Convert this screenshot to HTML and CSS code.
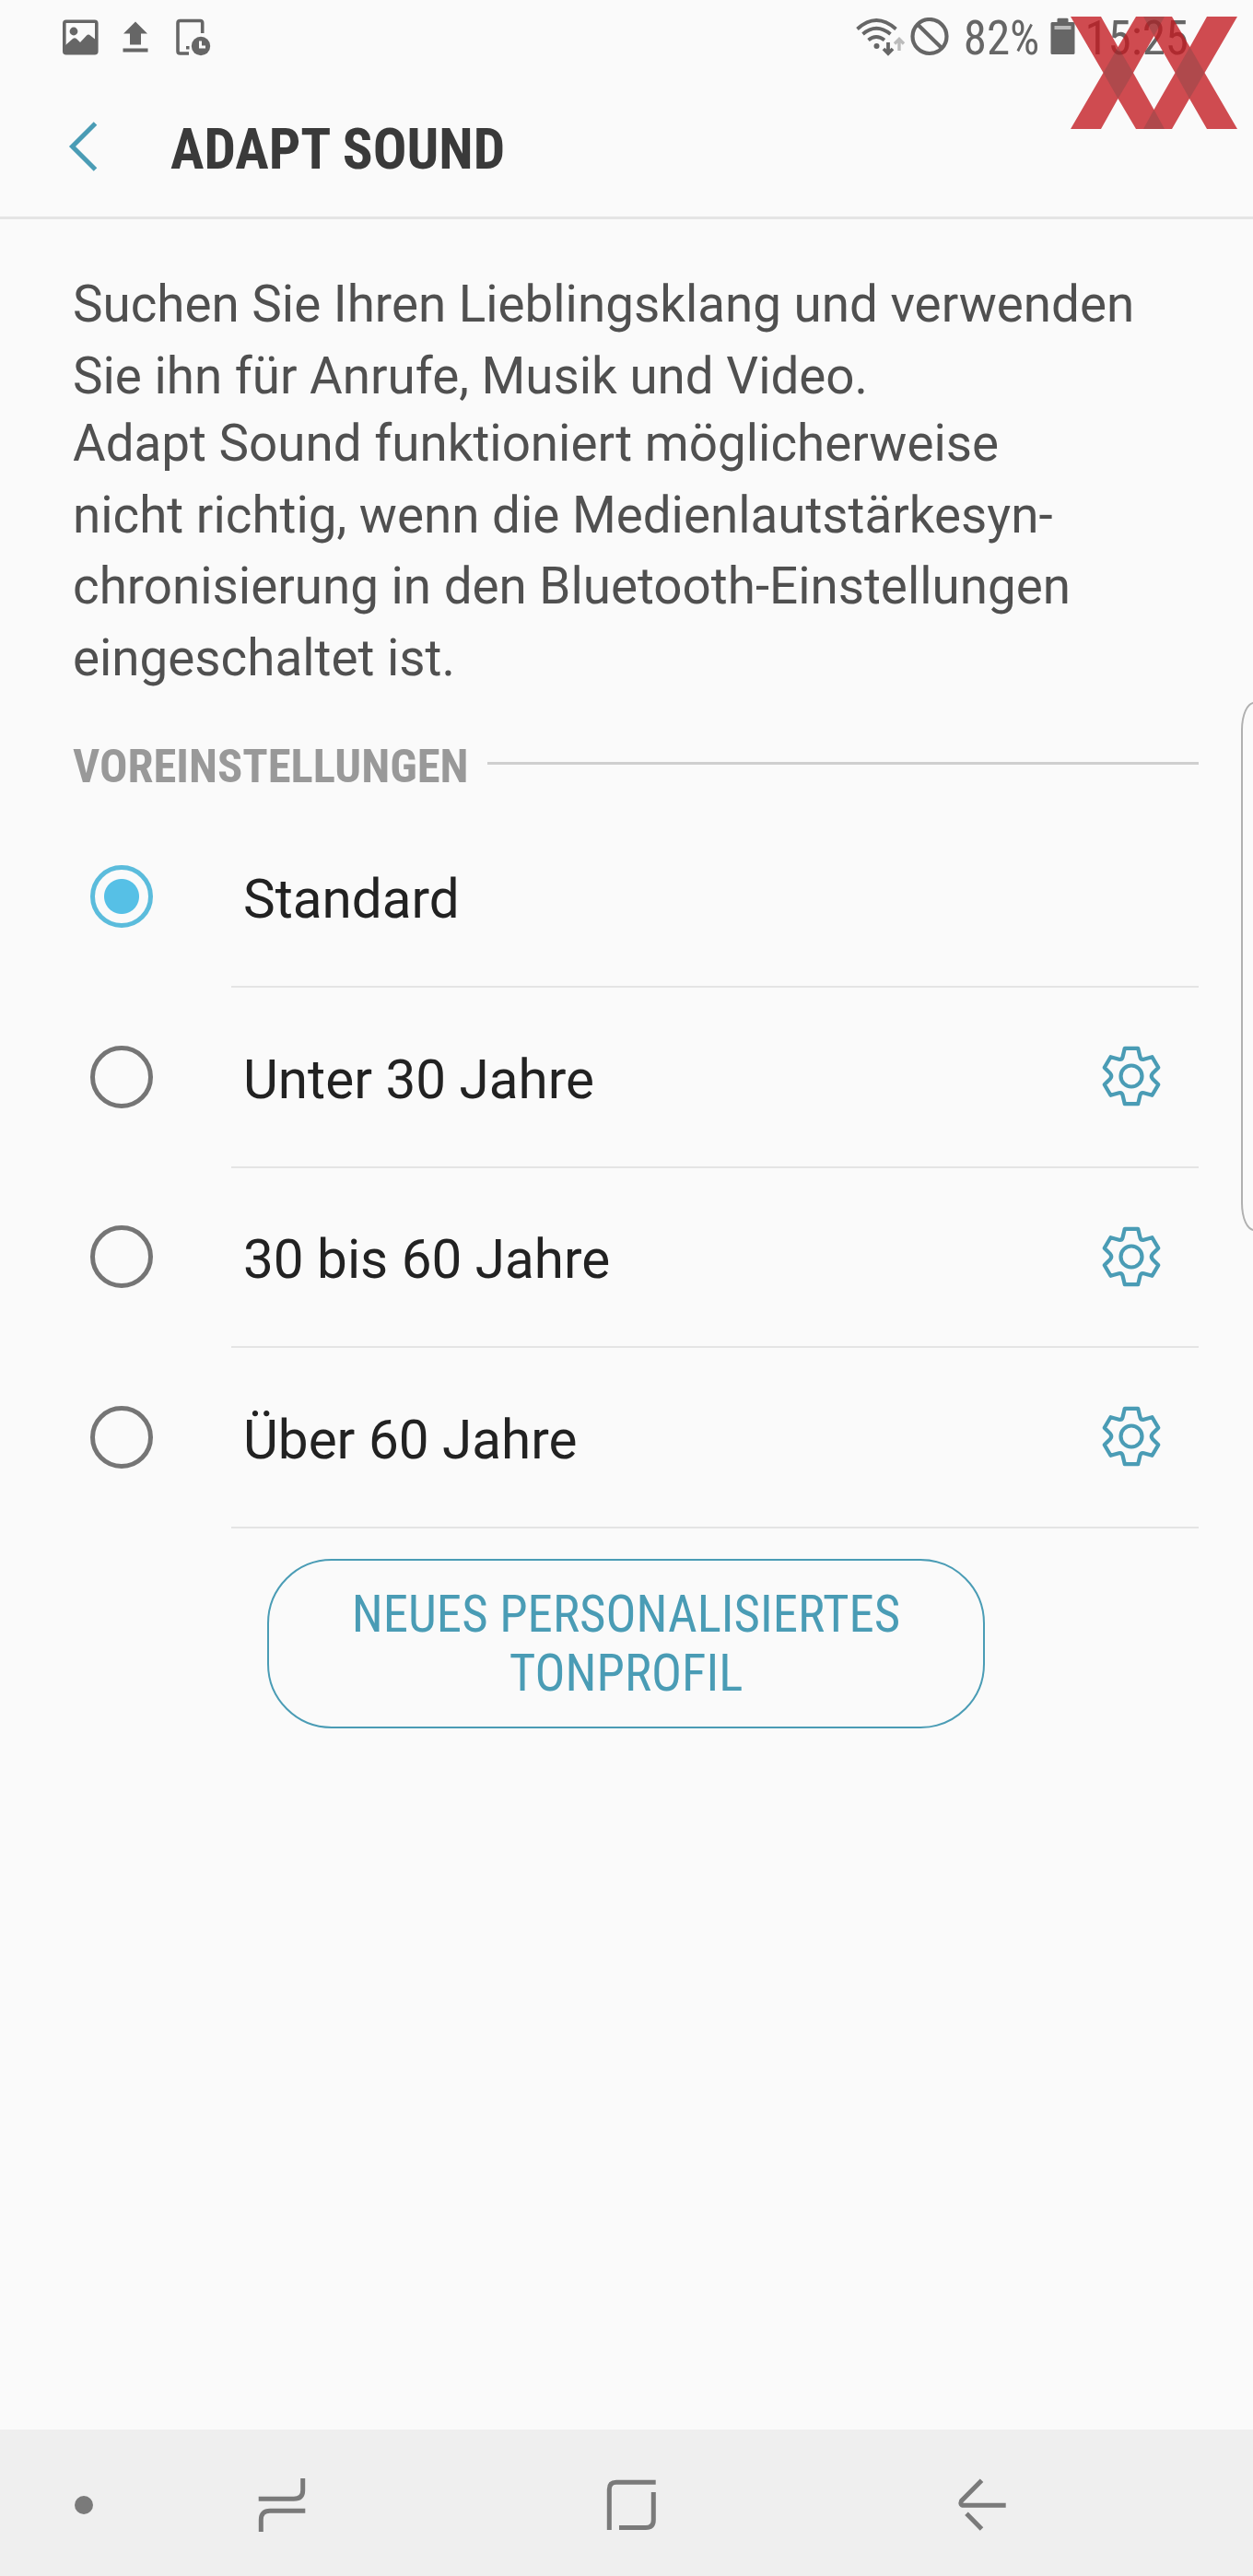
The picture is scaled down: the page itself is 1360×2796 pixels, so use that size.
FILE: index.html
```html
<!DOCTYPE html>
<html lang="de">
<head>
  <meta charset="UTF-8" />
  <meta name="viewport" content="width=device-width, initial-scale=1.0"/>
  <title>Adapt Sound</title>
  <link rel="stylesheet" href="styles.css">
</head>
<body>
  <div class="screen">
    <div class="status-bar">
      <div class="notifications">
        <svg class="icon-picture" width="39" height="39" viewBox="0 0 39 39">
          <rect x="1.8" y="2.3" width="35" height="34.4" rx="2" fill="none" stroke="#666" stroke-width="3.6"/>
          <circle cx="12" cy="13" r="4.4"/>
          <path d="M2 29 L11 21 Q13 19.5 15 21 L19 25 L26 17.5 Q28 15.5 30 17.5 L37 23 V37 H2 Z"/>
        </svg>
        <svg class="icon-upload" width="28" height="39" viewBox="0 0 28 39">
          <path d="M14 2.5 L27 15.5 H20 V27.5 H8 V15.5 H1 Z M0.5 31.5 H27.5 V35.5 H0.5 Z"/>
        </svg>
        <svg class="icon-tablet" width="38" height="41" viewBox="0 0 38 41">
          <path d="M28.7 16 V5 Q28.7 2.5 26.5 2.5 H4.5 Q2 2.5 2 5 V35.5 Q2 38 4.5 38 H14" fill="none" stroke="#666" stroke-width="3.6"/>
          <rect x="11" y="30" width="3.5" height="3.5"/>
          <circle cx="27" cy="30" r="10.2"/>
          <path d="M26.5 24.5 V31 H32" fill="none" stroke="#fafafa" stroke-width="3"/>
        </svg>
      </div>
      <div class="status-info">
        <svg class="icon-wifi" width="54" height="42" viewBox="0 0 54 42">
          <g fill="none" stroke="#666" stroke-width="3.8">
            <path d="M1.5 12.5 Q22 -6.5 43.5 12.5"/>
            <path d="M7.5 18 Q22 5.5 37.5 18"/>
            <path d="M13.5 24.5 Q22 17.5 31 24.5"/>
            <path d="M35 27 V39 M30 34 L35 39 L40 34"/>
          </g>
          <circle cx="22.5" cy="31" r="3"/>
          <path d="M47 36 V24 M42 28.5 L47 23.5 L52 28.5" fill="none" stroke="#bbb" stroke-width="3.4"/>
        </svg>
        <svg class="icon-blocked" width="42" height="42" viewBox="0 0 42 42">
          <g fill="none" stroke="#666" stroke-width="4.2">
            <circle cx="21" cy="20.5" r="18.5"/>
            <path d="M8 7.5 L34 33"/>
          </g>
        </svg>
        <span class="battery-level">82%</span>
        <svg class="icon-battery" width="27" height="42" viewBox="0 0 27 42">
          <path d="M7.5 5 V2 Q7.5 0.7 9 0.7 H18 Q19.5 0.7 19.5 2 V5 H25 Q26.5 5 26.5 6.5 V38.5 Q26.5 40 25 40 H2 Q0.5 40 0.5 38.5 V6.5 Q0.5 5 2 5 Z"/>
          <rect x="4.5" y="9" width="18" height="4" fill="#bbb"/>
        </svg>
        <span class="clock">15:25</span>
      </div>
    </div>

    <div class="title-bar">
      <svg class="icon-back" width="32" height="54" viewBox="0 0 32 54">
        <path d="M29.5 2 L4.5 27 L29.5 52" fill="none" stroke="#4a9cb5" stroke-width="5"/>
      </svg>
      <h1>ADAPT SOUND</h1>
    </div>

    <div class="content">
      <div class="description">
        <p>Suchen Sie Ihren Lieblingsklang und verwenden<br>Sie ihn für Anrufe, Musik und Video.</p>
        <p>Adapt Sound funktioniert möglicherweise<br>nicht richtig, wenn die Medienlautstärkesyn-<br>chronisierung in den Bluetooth-Einstellungen<br>eingeschaltet ist.</p>
      </div>

      <div class="section-label"><h2>VOREINSTELLUNGEN</h2></div>

      <div class="option">
        <span class="radio checked"></span>
        <div class="option-body"><span>Standard</span></div>
      </div>
      <div class="option">
        <span class="radio"></span>
        <div class="option-body">
          <span>Unter 30 Jahre</span>
          <svg class="icon-gear" width="66" height="66" viewBox="-33 -33 66 66"><use href="#gear"/></svg>
        </div>
      </div>
      <div class="option">
        <span class="radio"></span>
        <div class="option-body">
          <span>30 bis 60 Jahre</span>
          <svg class="icon-gear" width="66" height="66" viewBox="-33 -33 66 66"><use href="#gear"/></svg>
        </div>
      </div>
      <div class="option">
        <span class="radio"></span>
        <div class="option-body">
          <span>Über 60 Jahre</span>
          <svg class="icon-gear" width="66" height="66" viewBox="-33 -33 66 66"><use href="#gear"/></svg>
        </div>
      </div>

      <button class="new-profile">NEUES PERSONALISIERTES<br>TONPROFIL</button>
    </div>

    <div class="nav-bar">
      <span class="nav-dot"></span>
      <svg class="nav-recents" width="60" height="60" viewBox="0 0 60 60">
        <path d="M52.7 1 V14 Q52.7 23.3 43 23.3 H4.7 M55.3 36.3 H17 Q7.3 36.3 7.3 46 V59"/>
      </svg>
      <svg class="nav-home" width="60" height="60" viewBox="0 0 60 60">
        <path d="M5.3 57 V13 Q5.3 5.3 13 5.3 H55.7 M53.3 16 V46 Q53.3 54.5 45 54.5 H16"/>
      </svg>
      <svg class="nav-back" width="60" height="60" viewBox="0 0 60 60">
        <path d="M29.5 3.3 L7.5 25.5 Q5.5 30.3 10 30.3 H55.7 M13 39.3 L29.5 56"/>
      </svg>
    </div>

    <div class="edge-handle"></div>

    <!-- site logo -->
    <svg class="logo" width="182" height="122" viewBox="0 0 182 122">
      <path fill="#c31a20" fill-opacity="0.78" d="M0 0 H33 L51.5 33 L71 0 H110 L129.5 33 L148 0 H181 L145.5 61 L181 122 H148 L129 89 L110 122 H71 L51.5 89 L33 122 H0 L35.5 61 Z M68 61 L90.5 101 L113.5 61 L90.5 21 Z" fill-rule="evenodd"/>
      <path fill="#684646" fill-opacity="0.3" d="M51.5 33 L68 61 L51.5 89 L35.5 61 Z M129.5 33 L145.5 61 L129 89 L113.5 61 Z M79 0 H102 L90.5 21 Z M90.5 101 L102 122 H79 Z"/>
    </svg>
  </div>

  <svg class="symbols" width="0" height="0">
    <symbol id="gear" overflow="visible">
      <g fill="none" stroke="#4a9cb5" stroke-width="4.2" stroke-linejoin="round">
        <circle r="11.5"/>
        <path d="M-7.2 -30.2 H7.2 L9.5 -20.5 Q10.5 -17.5 13.5 -18.3 L22.5 -20.8 L29.3 -9.3 L23 -3 Q20.5 0 23 3 L29.3 9.3 L22.5 20.8 L13.5 18.3 Q10.5 17.5 9.5 20.5 L7.2 30.2 H-7.2 L-9.5 20.5 Q-10.5 17.5 -13.5 18.3 L-22.5 20.8 L-29.3 9.3 L-23 3 Q-20.5 0 -23 -3 L-29.3 -9.3 L-22.5 -20.8 L-13.5 -18.3 Q-10.5 -17.5 -9.5 -20.5 Z"/>
      </g>
    </symbol>
  </svg>
</body>
</html>
```
FILE: styles.css
```css
* {
  box-sizing: border-box;
}
body {
  margin: 0;
  background: #fafafa;
  font-family: Roboto, "Liberation Sans", sans-serif;
}
svg {
  display: block;
  flex: none;
}
.screen {
  position: relative;
  display: flex;
  flex-direction: column;
  width: 1360px;
  height: 2796px;
  overflow: hidden;
}
.status-bar {
  display: flex;
  justify-content: space-between;
  height: 80px;
  padding: 0 70px 0 68px;
  color: #666;
  fill: #666;
}
.notifications,
.status-info {
  display: flex;
  align-items: center;
  height: 80px;
}
.icon-upload {
  margin-left: 26px;
}
.icon-tablet {
  margin-left: 30px;
}
.icon-blocked {
  margin-left: 5px;
}
.battery-level,
.clock {
  padding-top: 3px;
  font-family: "Roboto Condensed", Roboto, sans-serif;
  font-stretch: 75%;
  font-size: 51px;
  line-height: 80px;
}
.battery-level {
  margin: 0 12px 0 16px;
}
.clock {
  margin-left: 10px;
}
.title-bar {
  display: flex;
  align-items: center;
  height: 158px;
  padding: 0 0 0 74px;
  border-bottom: 3px solid #e4e4e4;
}
.icon-back {
  margin-top: 3px;
}
.title-bar h1 {
  margin: 9px 0 0 79px;
  font-family: "Roboto Condensed", Roboto, sans-serif;
  font-stretch: 75%;
  font-size: 61px;
  font-weight: 700;
  color: #3a3a3a;
}
.content {
  flex: 1;
  padding: 54px 59px 0 79px;
}
.description {
  font-size: 54.75px;
  line-height: 77.5px;
  color: #505050;
  white-space: nowrap;
}
.description p {
  margin: 0;
}
.description p + p {
  margin-top: -4px;
}
.section-label {
  display: flex;
  align-items: center;
  height: 60px;
  margin: 48px 0 15.5px;
}
.section-label::after {
  content: "";
  flex: 1;
  height: 3px;
  margin: 0 0 5px 20px;
  background: #cfcfcf;
}
.section-label h2 {
  margin: 0;
  font-family: "Roboto Condensed", Roboto, sans-serif;
  font-stretch: 75%;
  font-size: 50.6px;
  font-weight: 700;
  color: #999;
}
.option {
  display: flex;
  align-items: center;
  height: 195.5px;
  padding-left: 19px;
}
.radio {
  flex: none;
  width: 68px;
  height: 68px;
  margin: 0 85px 2px 0;
  border: 5px solid #757575;
  border-radius: 50%;
}
.radio.checked {
  border-color: #5bbcdc;
  background: radial-gradient(circle, #56c0e6 18.5px, transparent 19.5px);
}
.option-body {
  flex: 1;
  display: flex;
  align-items: center;
  justify-content: space-between;
  height: 100%;
  padding: 0 40px 0 13px;
  border-bottom: 2px solid #e4e4e4;
  font-size: 58.4px;
  color: #222;
}
.option-body span {
  padding-top: 6px;
}
.icon-gear {
  margin-bottom: 1px;
}
.new-profile {
  display: block;
  width: 779px;
  height: 184px;
  margin: 33px 0 0 211px;
  padding: 0;
  border: 2px solid #4a9cb5;
  border-radius: 70px;
  background: none;
  font-family: "Roboto Condensed", Roboto, sans-serif;
  font-stretch: 75%;
  font-size: 54.9px;
  line-height: 64px;
  color: #4a9cb5;
}
.nav-bar {
  display: flex;
  align-items: center;
  height: 159px;
  padding: 5px 0 0 81px;
  background: #efefef;
}
.nav-bar svg {
  fill: none;
  stroke: #7a7a7a;
  stroke-width: 5;
}
.nav-dot {
  width: 20px;
  height: 20px;
  border-radius: 50%;
  background: #7a7a7a;
}
.nav-recents {
  margin-left: 175px;
}
.nav-home,
.nav-back {
  margin-left: 320px;
}
.edge-handle {
  position: absolute;
  top: 762px;
  right: -20px;
  width: 33px;
  height: 574px;
  border: 2px solid #b0b0b0;
  border-radius: 14px / 30px;
}
.logo {
  position: absolute;
  top: 18px;
  left: 1162px;
}
.symbols {
  position: absolute;
}
```
